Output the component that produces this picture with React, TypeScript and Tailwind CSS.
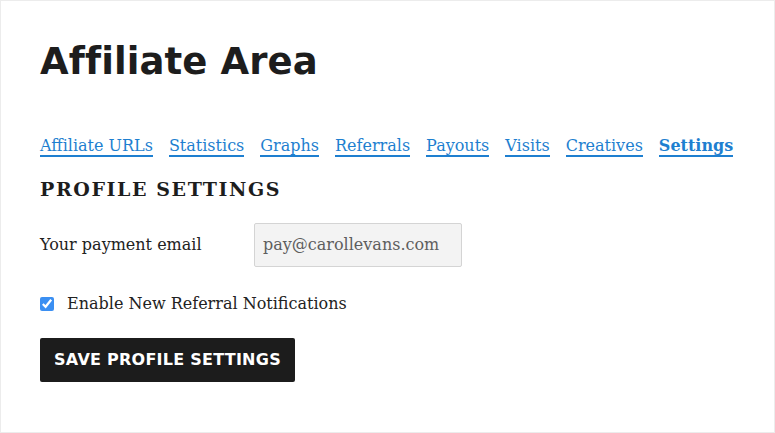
export default function App() {
  const tabs = [
    "Affiliate URLs",
    "Statistics",
    "Graphs",
    "Referrals",
    "Payouts",
    "Visits",
    "Creatives",
    "Settings",
  ];

  return (
    <div className="w-[775px] h-[433px] bg-white border border-[#ececec] overflow-hidden">
      <div className="pl-[39px] pt-[37px] font-['DejaVu_Serif',serif] text-[#222]">
        <h1 className="font-['DejaVu_Sans',sans-serif] font-bold text-[37px] leading-[48px] tracking-[0.1px] text-[#1d1d1d]">
          Affiliate Area
        </h1>

        <ul className="flex gap-[16px] mt-[48px] text-[16px] leading-[24px]">
          {tabs.map((t) => (
            <li key={t}>
              <a
                href="#"
                className={`text-[#1e7fd0] border-b-2 border-[#1e7fd0] ${
                  t === "Settings" ? "font-bold" : ""
                }`}
              >
                {t}
              </a>
            </li>
          ))}
        </ul>

        <h2 className="mt-[17px] text-[19px] font-bold tracking-[1.6px] text-[#1d1d1d]">
          PROFILE SETTINGS
        </h2>

        <div className="flex items-center mt-[19px]">
          <label className="w-[214px] text-[16px]">Your payment email</label>
          <input
            type="text"
            defaultValue="pay@carollevans.com"
            className="w-[208px] h-[44px] px-[8px] bg-[#f3f3f3] border border-[#d4d4d4] rounded-[2px] text-[16px] text-[#5e5e5e] outline-none"
          />
        </div>

        <label className="flex items-center mt-[25px] text-[16px]">
          <input
            type="checkbox"
            defaultChecked
            className="w-[14px] h-[14px] mr-[13px] accent-[#3b8ff2]"
          />
          Enable New Referral Notifications
        </label>

        <button className="mt-[22px] w-[255px] h-[44px] bg-[#1c1c1c] rounded-[2px] text-white font-['DejaVu_Sans',sans-serif] font-bold text-[16px] tracking-[0.25px]">
          SAVE PROFILE SETTINGS
        </button>
      </div>
    </div>
  );
}
